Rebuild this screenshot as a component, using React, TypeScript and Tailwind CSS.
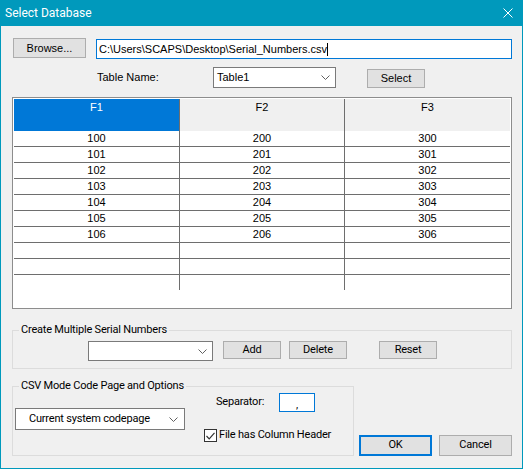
import React from 'react';

const ms = "font-['Liberation_Sans',Arial,sans-serif] text-[11px]";
const ui = "font-['Roboto','Liberation_Sans',sans-serif] text-[11px] tracking-[-0.2px]";

const rows: (number[] | null)[] = [
  [100, 200, 300],
  [101, 201, 301],
  [102, 202, 302],
  [103, 203, 303],
  [104, 204, 304],
  [105, 205, 305],
  [106, 206, 306],
  null,
  null,
  null,
];

function Chevron() {
  return (
    <svg width="9" height="5" viewBox="0 0 9 5" className="shrink-0">
      <path d="M0.5 0.5 L4.5 4.5 L8.5 0.5" fill="none" stroke="#606060" strokeWidth="1" />
    </svg>
  );
}

function Btn({ label, className }: { label: string; className: string }) {
  return (
    <button className={`flex items-center justify-center bg-[#e1e1e1] border border-[#adadad] text-black ${className}`}>
      {label}
    </button>
  );
}

export default function App() {
  return (
    <div className="w-[523px] h-[469px] bg-[#0099bc] flex flex-col select-none">
      {/* title bar */}
      <div className="h-[26px] flex items-center justify-between pl-[5px] pr-[10px] text-white font-['Roboto','Liberation_Sans',sans-serif] text-[12px]">
        <span>Select Database</span>
        <svg width="10" height="10" viewBox="0 0 10 10">
          <path d="M0.5 0.5 L9.5 9.5 M9.5 0.5 L0.5 9.5" stroke="#ffffff" strokeWidth="1" />
        </svg>
      </div>

      <div className="flex-1 mx-px mb-px bg-[#f0f0f0] flex flex-col text-black">
        {/* file row */}
        <div className="flex items-start pt-[12px] pl-[12px]">
          <Btn label="Browse..." className={`${ms} w-[73px] h-[20px]`} />
          <div className={`${ms} ml-[10px] mt-[1px] w-[416px] h-[20px] bg-white border border-[#0078d7] flex items-center pl-[2px]`}>
            <span>{'C:\\Users\\SCAPS\\Desktop\\Serial_Numbers.csv'}</span>
            <span className="w-px h-[13px] bg-black" />
          </div>
        </div>

        {/* table name row */}
        <div className={`${ms} flex items-start mt-[8px] pl-[96px]`}>
          <div className="w-[116px] h-[21px] flex items-center">Table Name:</div>
          <div className="w-[123px] h-[21px] bg-white border border-[#7a7a7a] flex items-center justify-between pl-[3px] pr-[5px]">
            <span>Table1</span>
            <Chevron />
          </div>
          <Btn label="Select" className="ml-[31px] mt-[2px] w-[58px] h-[19px]" />
        </div>

        {/* data grid */}
        <div className={`${ms} ml-[11px] mt-[9px] w-[500px] h-[212px] border border-[#8d8d8d] bg-white p-px`}>
          <div className="flex h-[32px] leading-[15px] text-center">
            <div className="w-[166px] bg-[#0078d7] text-white border-r border-[#6e6e6e] pt-px">F1</div>
            <div className="w-[165px] bg-[#f0f0f0] border-r border-[#6e6e6e] pt-px">F2</div>
            <div className="w-[165px] bg-[#f0f0f0] pt-px">F3</div>
          </div>
          {rows.map((r, i) => (
            <div
              key={i}
              className={`flex leading-[15px] text-center ${i < rows.length - 1 ? 'h-[16px] border-b border-[#6e6e6e]' : 'h-[15px]'}`}
            >
              <div className="w-[166px] border-r border-[#6e6e6e]">{r ? r[0] : ''}</div>
              <div className="w-[165px] border-r border-[#6e6e6e]">{r ? r[1] : ''}</div>
              <div className="w-[165px]">{r ? r[2] : ''}</div>
            </div>
          ))}
        </div>

        {/* serial numbers group */}
        <fieldset className={`${ui} ml-[11px] mt-[14px] w-[500px] border border-[#dcdcdc] pb-[7px]`}>
          <legend className="ml-[6px] px-[2px] leading-[14px]">Create Multiple Serial Numbers</legend>
          <div className="flex items-start mt-[4px] ml-[75px]">
            <div className="w-[125px] h-[20px] bg-white border border-[#7a7a7a] flex items-center justify-end pr-[5px]">
              <Chevron />
            </div>
            <Btn label="Add" className="ml-[10px] w-[58px] h-[18px]" />
            <Btn label="Delete" className="ml-[8px] w-[58px] h-[18px]" />
            <Btn label="Reset" className="ml-[32px] w-[58px] h-[18px]" />
          </div>
        </fieldset>

        {/* csv options + dialog buttons */}
        <div className={`${ui} flex items-end ml-[11px] mt-[10px]`}>
          <fieldset className="w-[342px] border border-[#dcdcdc] pb-[13px]">
            <legend className="ml-[6px] px-[2px] leading-[14px]">CSV Mode Code Page and Options</legend>
            <div className="flex items-start">
              <div className="ml-[2px] mt-[15px] w-[170px] h-[22px] bg-white border border-[#7a7a7a] flex items-center justify-between pl-[13px] pr-[6px]">
                <span>Current system codepage</span>
                <Chevron />
              </div>
              <div className="ml-[19px] flex flex-col">
                <div className="flex items-center">
                  <span className="ml-[12px] w-[63px]">Separator:</span>
                  <div className="w-[36px] h-[19px] bg-white border border-[#0078d7] flex items-center justify-center leading-none pt-[3px]">,</div>
                </div>
                <div className="flex items-center mt-[17px] h-[13px]">
                  <div className="w-[13px] h-[13px] bg-white border border-[#333333] flex items-center justify-center">
                    <svg width="9" height="8" viewBox="0 0 9 8">
                      <path d="M0.5 4 L3.2 6.8 L8.5 0.8" fill="none" stroke="#333333" strokeWidth="1.2" />
                    </svg>
                  </div>
                  <span className="ml-[2px]">File has Column Header</span>
                </div>
              </div>
            </div>
          </fieldset>
          <button className="ml-[5px] w-[73px] h-[21px] bg-[#e1e1e1] border-2 border-[#0078d7] flex items-center justify-center">
            OK
          </button>
          <Btn label="Cancel" className="ml-[7px] w-[73px] h-[21px]" />
        </div>
      </div>
    </div>
  );
}
